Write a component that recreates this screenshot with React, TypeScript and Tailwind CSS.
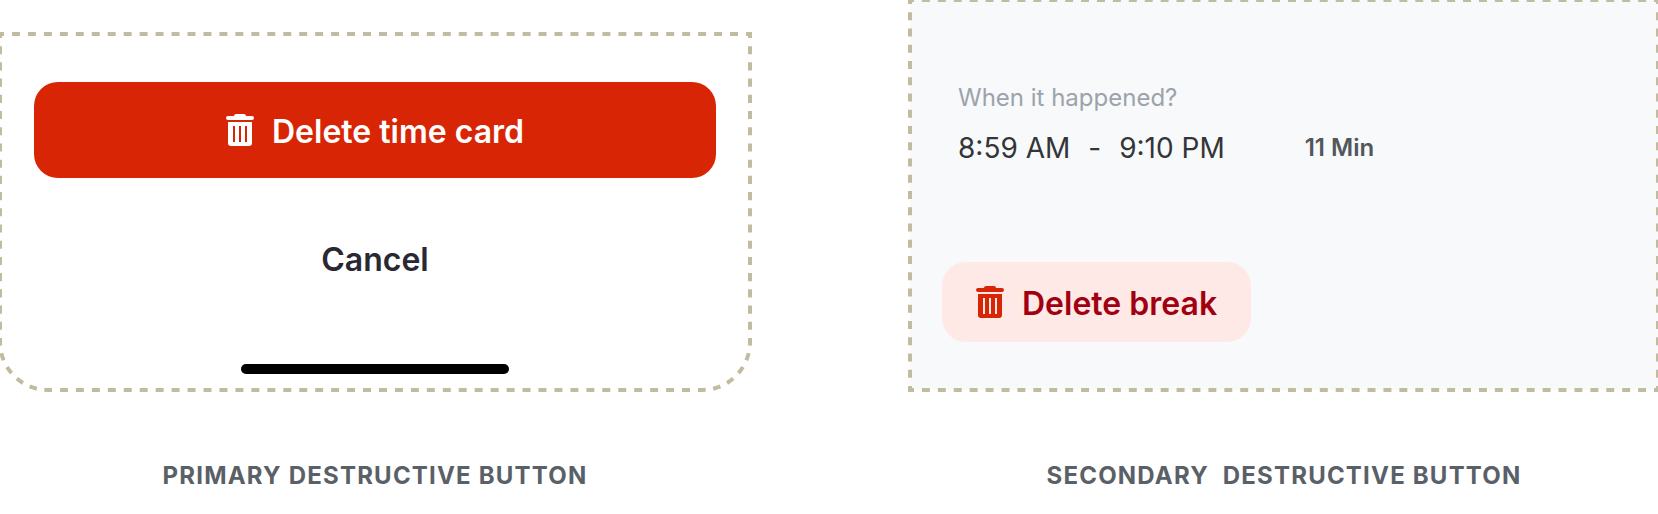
import type { ReactNode } from 'react';

function TrashIcon({ className }: { className: string }) {
  return (
    <svg viewBox="0 0 28 32" fill="currentColor" aria-hidden="true" className={`h-8 w-7 shrink-0 ${className}`}>
      <path d="M8 2a2 2 0 0 1 2-2h8a2 2 0 0 1 2 2h6a2 2 0 0 1 0 4H2a2 2 0 0 1 0-4z" />
      <path
        fillRule="evenodd"
        d="M2 8h24v21a3 3 0 0 1-3 3H5a3 3 0 0 1-3-3zM7 12v16h2V12zM13 12v16h2V12zM19 12v16h2V12z"
      />
    </svg>
  );
}

// Dashes are counted in pairs along each edge, so both ends land on half a dash.
const dash = { strokeDasharray: '1 1', strokeDashoffset: 0.5 };

// Fills the notch where two butt-ended edges meet
function Corner({ x, y }: { x: string; y: string }) {
  return <rect x={x} y={y} width="4" height="4" transform="translate(-2 -2)" fill="#c1bc9f" stroke="none" />;
}

function SquareOutline() {
  return (
    <svg
      aria-hidden="true"
      className="pointer-events-none absolute inset-0 size-full overflow-visible"
      fill="none"
      stroke="#c1bc9f"
      strokeWidth="4"
    >
      <line x1="0" y1="0" x2="100%" y2="0" pathLength="94" {...dash} />
      <line x1="0" y1="100%" x2="100%" y2="100%" pathLength="94" {...dash} />
      <line x1="0" y1="0" x2="0" y2="100%" pathLength="48" {...dash} />
      <line x1="100%" y1="0" x2="100%" y2="100%" pathLength="48" {...dash} />
      <Corner x="0" y="0" />
      <Corner x="100%" y="0" />
      <Corner x="0" y="100%" />
      <Corner x="100%" y="100%" />
    </svg>
  );
}

function SheetOutline() {
  return (
    <div aria-hidden="true" className="pointer-events-none absolute inset-0 flex flex-col">
      <svg className="w-full flex-1 overflow-visible" fill="none" stroke="#c1bc9f" strokeWidth="4">
        <line x1="0" y1="0" x2="100%" y2="0" pathLength="94" {...dash} />
        <line x1="0" y1="0" x2="0" y2="100%" pathLength="38" {...dash} />
        <line x1="100%" y1="0" x2="100%" y2="100%" pathLength="38" {...dash} />
        <Corner x="0" y="0" />
        <Corner x="100%" y="0" />
      </svg>
      <div className="flex h-12">
        <svg className="size-12 overflow-visible" fill="none" stroke="#c1bc9f" strokeWidth="4">
          <path d="M0 0A48 48 0 0 0 48 48" pathLength="10" {...dash} />
        </svg>
        <svg className="h-12 flex-1 overflow-visible" fill="none" stroke="#c1bc9f" strokeWidth="4">
          <line x1="0" y1="48" x2="100%" y2="48" pathLength="82" {...dash} />
        </svg>
        <svg className="size-12 overflow-visible" fill="none" stroke="#c1bc9f" strokeWidth="4">
          <path d="M48 0A48 48 0 0 1 0 48" pathLength="10" {...dash} />
        </svg>
      </div>
    </div>
  );
}

function ButtonLabel({ children }: { children: ReactNode }) {
  return <span className="pt-1 text-[32px] leading-10 font-semibold">{children}</span>;
}

function Caption({ children }: { children: ReactNode }) {
  return (
    <figcaption className="mt-[70px] text-center text-2xl font-bold tracking-wider whitespace-pre text-[#5a6067]">
      {children}
    </figcaption>
  );
}

export default function App() {
  return (
    <main className="grid grid-cols-[750fr_748fr] gap-40 overflow-hidden bg-white pb-6 font-['Inter',sans-serif]">
      <figure className="pt-[34px]">
        <div className="relative flex flex-col px-[34px] pt-12 pb-4">
          <SheetOutline />
          <button
            type="button"
            className="flex h-24 items-center justify-center gap-[18px] rounded-3xl bg-[#d82505] text-white"
          >
            <TrashIcon className="text-white" />
            <ButtonLabel>Delete time card</ButtonLabel>
          </button>
          <button type="button" className="mt-8 flex h-24 items-center justify-center rounded-3xl text-[#2a2833]">
            <ButtonLabel>Cancel</ButtonLabel>
          </button>
          <div className="mt-[58px] h-[10px] w-[268px] self-center rounded-full bg-black" />
        </div>
        <Caption>PRIMARY DESTRUCTIVE BUTTON</Caption>
      </figure>

      <figure>
        <div className="relative bg-[#f8f9fb] px-8 pt-[82px] pb-12">
          <SquareOutline />
          <div className="px-4">
            <p className="text-2xl text-[#9ca3ab]">When it happened?</p>
            <div className="mt-4 flex items-center text-[28px] leading-9 text-[#333538]">
              <span>8:59 AM</span>
              <span className="px-[18px]">-</span>
              <span>9:10 PM</span>
              <span className="ml-20 text-2xl font-semibold text-[#51575b]">11 Min</span>
            </div>
          </div>
          <button
            type="button"
            className="mt-24 flex h-20 items-center gap-[18px] rounded-3xl bg-[#ffe9e6] px-[34px] text-[#a0000f]"
          >
            <TrashIcon className="text-[#d82505]" />
            <ButtonLabel>Delete break</ButtonLabel>
          </button>
        </div>
        <Caption>{'SECONDARY  DESTRUCTIVE BUTTON'}</Caption>
      </figure>
    </main>
  );
}
